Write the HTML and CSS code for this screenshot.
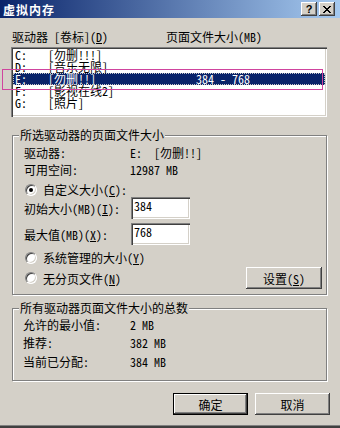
FILE: index.html
```html
<!DOCTYPE html>
<html lang="zh-CN">
<head>
    <meta charset="UTF-8">
    <title>虚拟内存</title>
    <link rel="stylesheet" href="styles.css">
</head>
<body>
    <div class="window">
        <div class="titlebar">
            <span class="title">虚拟内存</span>
            <div class="title-buttons">
                <span class="tbtn help">?</span>
                <span class="tbtn">
                    <svg width="8" height="7" viewBox="0 0 8 7"><path fill="#000" d="M0 0h2v1h-2zM6 0h2v1h-2zM1 1h2v1h-2zM5 1h2v1h-2zM2 2h4v1h-4zM3 3h2v1h-2zM2 4h4v1h-4zM1 5h2v1h-2zM5 5h2v1h-2zM0 6h2v1h-2zM6 6h2v1h-2z"/></svg>
                </span>
            </div>
        </div>

        <div class="content">
            <div class="list-head">
                <span class="col-drive">驱动器 [卷标](<u>D</u>)</span>
                <span>页面文件大小(MB)</span>
            </div>
            <div class="listbox">
                <div class="row"><span class="c1">C:</span><span class="c2">[勿删!!!]</span><span></span></div>
                <div class="row"><span class="c1">D:</span><span class="c2">[音乐无限]</span><span></span></div>
                <div class="row sel"><span class="c1">E:</span><span class="c2">[勿删!!]</span><span>384 - 768</span></div>
                <div class="row"><span class="c1">F:</span><span class="c2">[影视在线2]</span><span></span></div>
                <div class="row"><span class="c1">G:</span><span class="c2">[照片]</span><span></span></div>
            </div>

            <div class="group group-sel">
                <span class="legend">所选驱动器的页面文件大小</span>
                <div class="field"><span class="label">驱动器:</span><span>E:&nbsp;&nbsp;[勿删!!]</span></div>
                <div class="field f2"><span class="label">可用空间:</span><span>12987 MB</span></div>
                <div class="radio-row r-custom"><span class="radio checked"></span><span>自定义大小(<u>C</u>):</span></div>
                <div class="input-row i1"><span class="label wide">初始大小(MB)(<u>I</u>):</span><span class="textbox">384</span></div>
                <div class="input-row i2"><span class="label wide">最大值(MB)(<u>X</u>):</span><span class="textbox">768</span></div>
                <div class="radio-row r-sys"><span class="radio"></span><span>系统管理的大小(<u>Y</u>)</span></div>
                <div class="last-row">
                    <div class="radio-row"><span class="radio"></span><span>无分页文件(<u>N</u>)</span></div>
                    <span class="btn btn-set"><span>设置(<u>S</u>)</span></span>
                </div>
            </div>

            <div class="group group-total">
                <span class="legend">所有驱动器页面文件大小的总数</span>
                <div class="field"><span class="label">允许的最小值:</span><span>2 MB</span></div>
                <div class="field t2"><span class="label">推荐:</span><span>382 MB</span></div>
                <div class="field t3"><span class="label">当前已分配:</span><span>384 MB</span></div>
            </div>

            <div class="actions">
                <span class="btn default">确定</span>
                <span class="btn">取消</span>
            </div>
        </div>

        <!-- highlight drawn over the screenshot -->
        <div class="mark"></div>
    </div>
</body>
</html>
```

FILE: styles.css
```css
body {
    margin: 0;
    background-color: #d4d0c8;
    font-family: "Noto Sans Mono CJK SC", "Noto Sans CJK SC", monospace;
    font-size: 12px;
    color: #000000;
}
u {
    text-decoration-thickness: 1px;
    text-underline-offset: 1px;
}
.window {
    position: relative;
    width: 340px;
    height: 428px;
    overflow: hidden;
    box-sizing: border-box;
    border-bottom: 2px solid #404040;
    box-shadow: inset 0 -1px #808080;
}
.titlebar {
    height: 18px;
    display: flex;
    align-items: center;
    justify-content: space-between;
    padding: 0 5px 0 3px;
    background: linear-gradient(to right, #0a246a, #a6caf0);
}
.title {
    color: #ffffff;
    font-family: "Noto Sans CJK SC", sans-serif;
    font-weight: bold;
    font-size: 12px;
    letter-spacing: 1px;
}
.title-buttons {
    display: flex;
    gap: 2px;
}
.tbtn {
    width: 16px;
    height: 14px;
    box-sizing: border-box;
    display: flex;
    align-items: center;
    justify-content: center;
    background-color: #d4d0c8;
    box-shadow: inset -1px -1px #404040, inset 1px 1px #ffffff, inset -2px -2px #808080;
}
.tbtn.help {
    font: bold 11px "Liberation Sans", sans-serif;
}
.content {
    padding: 13px 10px 0 11px;
}
.list-head {
    display: flex;
    height: 12px;
    line-height: 12px;
    padding-left: 1px;
}
.col-drive {
    width: 154px;
}
.listbox {
    margin-top: 4px;
    width: 316px;
    height: 70px;
    box-sizing: border-box;
    padding: 2px;
    background-color: #ffffff;
    box-shadow: inset 1px 1px #808080, inset 2px 2px #404040, inset -1px -1px #ffffff, inset -2px -2px #d4d0c8;
}
.row {
    display: flex;
    height: 12px;
    line-height: 12px;
    padding-left: 2px;
}
.row.sel {
    background-color: #0a246a;
    color: #ffffff;
    outline: 1px dotted #c8c8c8;
    outline-offset: -1px;
}
.c1 {
    width: 33px;
    flex: none;
}
.c2 {
    width: 148px;
    flex: none;
}
.group {
    position: relative;
    width: 315px;
    margin-left: 1px;
    box-sizing: border-box;
    border: 1px solid #808080;
    box-shadow: inset 1px 1px #ffffff, 1px 1px #ffffff;
}
.legend {
    position: absolute;
    top: -7px;
    left: 6px;
    padding: 0 1px;
    line-height: 12px;
    background-color: #d4d0c8;
}
.group-sel {
    margin-top: 18px;
    padding: 11px 4px 5px 11px;
}
.group-total {
    margin-top: 13px;
    padding: 10px 4px 12px 10px;
}
.field {
    display: flex;
    height: 12px;
    line-height: 12px;
}
.label {
    width: 106px;
}
.group-total .label {
    width: 107px;
}
.label.wide {
    width: 107px;
}
.f2 {
    margin-top: 5px;
}
.t2 {
    margin-top: 6px;
}
.t3 {
    margin-top: 7px;
}
.radio-row {
    display: flex;
    align-items: center;
    gap: 6px;
    height: 13px;
    padding-left: 1px;
}
.radio {
    position: relative;
    width: 12px;
    height: 12px;
    box-sizing: border-box;
    border-radius: 50%;
    border: 1px solid;
    border-color: #808080 #ffffff #ffffff #808080;
    background-color: #ffffff;
    box-shadow: inset 1px 1px #404040, inset -1px -1px #d4d0c8;
}
.radio.checked::after {
    content: "";
    position: absolute;
    left: 3px;
    top: 3px;
    width: 4px;
    height: 4px;
    border-radius: 50%;
    background-color: #000000;
}
.r-custom {
    margin-top: 7px;
}
.input-row {
    display: flex;
    align-items: center;
    height: 22px;
}
.i1 {
    margin-top: 1px;
}
.i2 {
    margin-top: 4px;
}
.textbox {
    width: 59px;
    height: 22px;
    box-sizing: border-box;
    padding: 3px 0 0 3px;
    line-height: 12px;
    background-color: #ffffff;
    box-shadow: inset 1px 1px #808080, inset 2px 2px #404040, inset -1px -1px #ffffff, inset -2px -2px #d4d0c8;
}
.r-sys {
    margin-top: 6px;
}
.last-row {
    display: flex;
    align-items: center;
    justify-content: space-between;
    height: 22px;
    margin-top: 3px;
}
.btn {
    display: flex;
    align-items: center;
    justify-content: center;
    width: 75px;
    height: 22px;
    box-sizing: border-box;
    background-color: #d4d0c8;
    box-shadow: inset -1px -1px #404040, inset 1px 1px #ffffff, inset -2px -2px #808080;
}
.btn-set {
    width: 76px;
}
.btn.default {
    border: 1px solid #000000;
}
.actions {
    display: flex;
    justify-content: flex-end;
    gap: 7px;
    margin-top: 12px;
}
.mark {
    position: absolute;
    left: 2px;
    top: 69px;
    width: 321px;
    height: 21px;
    box-sizing: border-box;
    border: 1px solid #d0449e;
}
```
